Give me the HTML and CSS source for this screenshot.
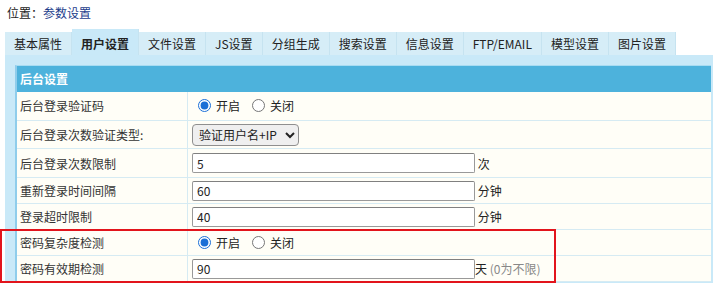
FILE: index.html
```html
<!DOCTYPE html>
<html lang="zh-CN">
<head>
  <meta charset="UTF-8" />
  <title>参数设置</title>
  <link rel="stylesheet" href="styles.css">
</head>
<body>
<div class="page">
  <div class="location">位置：<a href="#">参数设置</a></div>

  <div class="tabs">
    <div class="tab">基本属性</div>
    <div class="tab active">用户设置</div>
    <div class="tab">文件设置</div>
    <div class="tab">JS设置</div>
    <div class="tab">分组生成</div>
    <div class="tab">搜索设置</div>
    <div class="tab">信息设置</div>
    <div class="tab">FTP/EMAIL</div>
    <div class="tab">模型设置</div>
    <div class="tab">图片设置</div>
  </div>

  <div class="panel">
    <div class="box">
      <div class="box-head">后台设置</div>

      <div class="row tall">
        <div class="label">后台登录验证码</div>
        <div class="value">
          <label class="opt"><input type="radio" name="vcode" checked>开启</label>
          <label class="opt"><input type="radio" name="vcode">关闭</label>
        </div>
      </div>

      <div class="row tall">
        <div class="label">后台登录次数验证类型:</div>
        <div class="value">
          <select class="select">
            <option>验证用户名+IP</option>
            <option>验证用户名</option>
            <option>验证IP</option>
          </select>
        </div>
      </div>

      <div class="row tall">
        <div class="label">后台登录次数限制</div>
        <div class="value"><input class="text" type="text" value="5"> 次</div>
      </div>

      <div class="row">
        <div class="label">重新登录时间间隔</div>
        <div class="value"><input class="text" type="text" value="60"> 分钟</div>
      </div>

      <div class="row">
        <div class="label">登录超时限制</div>
        <div class="value"><input class="text" type="text" value="40"> 分钟</div>
      </div>

      <div class="row">
        <div class="label">密码复杂度检测</div>
        <div class="value">
          <label class="opt"><input type="radio" name="pwcheck" checked>开启</label>
          <label class="opt"><input type="radio" name="pwcheck">关闭</label>
        </div>
      </div>

      <div class="row">
        <div class="label">密码有效期检测</div>
        <div class="value"><input class="text" type="text" value="90">天 <span class="hint">(0为不限)</span></div>
      </div>
    </div>
  </div>

  <!-- annotation frame around the new password options -->
  <div class="mark"></div>
</div>
</body>
</html>
```

FILE: styles.css
```css
body {
  margin: 0;
  font-family: "Noto Sans CJK SC", "Noto Sans", sans-serif;
  font-size: 12px;
  color: #222;
  background: #fff;
}

.page {
  position: relative;
}

.location {
  height: 29px;
  line-height: 26px;
  padding-left: 7px;
}

.location a {
  color: #1c3d8c;
  text-decoration: none;
}

.tabs {
  display: flex;
  align-items: flex-end;
  margin-left: 5px;
  width: 674px;
}

.tab {
  height: 23px;
  line-height: 23px;
  padding: 0 9px;
  background: #d6edf7;
  border-right: 1px solid #c6e3f0;
  white-space: nowrap;
}

.tab.active {
  height: 26px;
  padding-top: 3px;
  box-sizing: border-box;
  line-height: 23px;
  font-weight: bold;
  background: #c9e9f8;
}

.panel {
  margin: 0 4px 0 5px;
  padding: 10px 2px 1px 10px;
  background: #c9e9f8;
}

.box {
  border-top: 1px solid #a8dcf2;
  border-left: 2px solid #8fcdeb;
  background: #fffef7;
}

.box-head {
  height: 26px;
  line-height: 26px;
  padding-left: 3px;
  background: #4db2dc;
  color: #fff;
  font-weight: bold;
}

.row {
  display: grid;
  grid-template-columns: 171px 1fr;
  height: 26px;
  box-sizing: border-box;
  border-bottom: 1px solid #d6ebf3;
}

.row.tall {
  height: 28.7px;
}

.label {
  display: flex;
  align-items: center;
  padding-left: 3px;
  border-right: 1px solid #d6ebf3;
  color: #333;
}

.value {
  display: flex;
  align-items: center;
  padding-left: 4px;
  white-space: pre;
}

.opt {
  display: flex;
  align-items: center;
  margin-right: 6px;
}

.opt input {
  width: 13px;
  height: 13px;
  margin: 0 5px 0 6px;
  accent-color: #1b6fd6;
}

.select {
  height: 22px;
  width: 107px;
  font-family: inherit;
  font-size: 12px;
  color: #222;
  background-color: #efefef;
  border: 1px solid #8f8f8f;
  border-radius: 4px;
  padding: 0 2px;
}

.text {
  width: 283px;
  height: 20px;
  box-sizing: border-box;
  margin: 0;
  padding: 0 4px;
  font-family: inherit;
  font-size: 12px;
  color: #222;
  border: 1px solid #999;
  border-top-color: #808080;
  border-radius: 2px;
  background: #fff;
}

.hint {
  color: #888;
}

.mark {
  position: absolute;
  left: 0;
  top: 229px;
  width: 556px;
  height: 54px;
  box-sizing: border-box;
  border: 2px solid #e2141c;
}
```
